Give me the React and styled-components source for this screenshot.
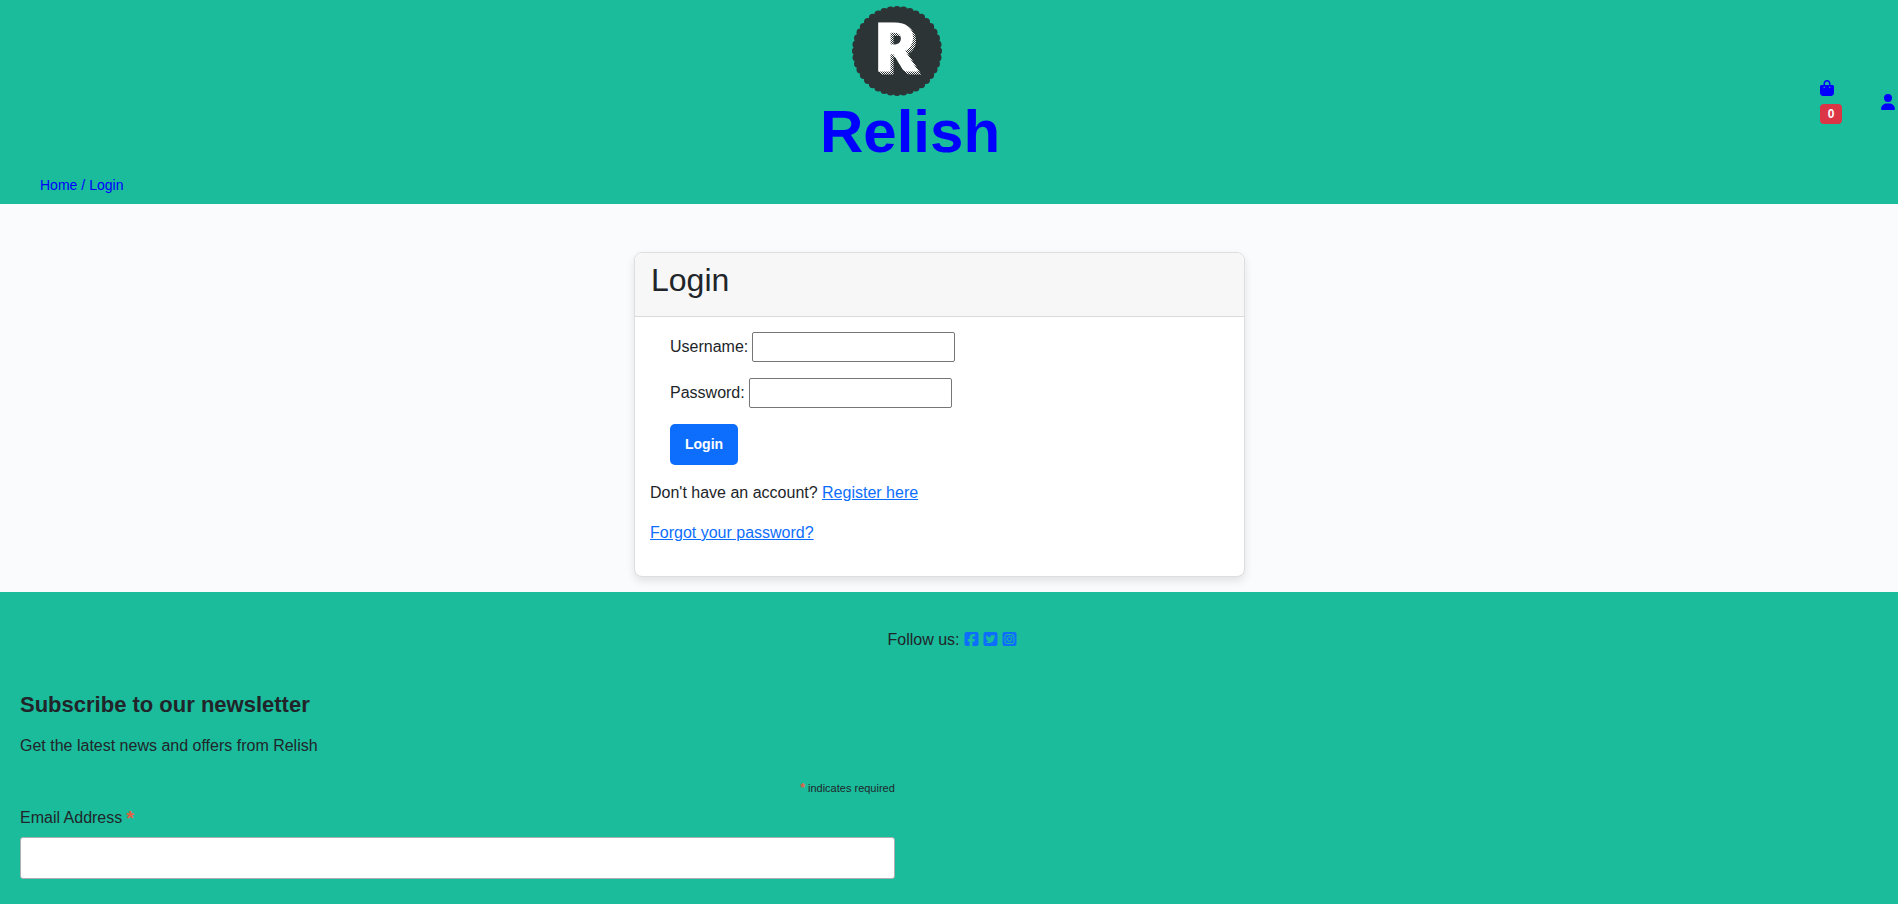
import React from 'react';
import styled, { createGlobalStyle } from 'styled-components';
import {
  FaBagShopping,
  FaUser,
  FaSquareFacebook,
  FaSquareTwitter,
  FaSquareInstagram,
} from 'react-icons/fa6';

const teal = '#1abc9c';
const ink = '#212529';

const GlobalStyle = createGlobalStyle`
  *, *::before, *::after { box-sizing: border-box; }
  body {
    margin: 0;
    background: #fafbfd;
    color: ${ink};
    font-family: "Liberation Sans", Arial, sans-serif;
    font-size: 16px;
    line-height: 24px;
  }
  h1, h2, p { margin: 0; }
`;

const Page = styled.div`
  display: flex;
  flex-direction: column;
  min-height: 100vh;
`;

const Header = styled.header`
  display: flex;
  align-items: center;
  background: ${teal};
`;

const HeaderMain = styled.div`
  flex: 1;
  padding: 6px 0 8px;
`;

const Brand = styled.a`
  display: flex;
  flex-direction: column;
  align-items: center;
  color: #0000ff;
  text-decoration: none;
`;

const Logo = styled.svg`
  width: 90px;
  height: 90px;
  margin-right: 26px;
`;

const BrandName = styled.h1`
  font-size: 60px;
  line-height: 72px;
`;

const Breadcrumb = styled.nav`
  display: flex;
  gap: 4px;
  padding: 6px 40px 0;
  color: #0000ff;
  font-size: 14px;
  line-height: 22px;
`;

const Crumb = styled.a`
  color: inherit;
  text-decoration: none;
`;

const Actions = styled.nav`
  display: flex;
  align-items: center;
  justify-content: space-between;
  width: 78px;
  padding-right: 3px;
`;

const Action = styled.a`
  display: flex;
  flex-direction: column;
  gap: 8px;
  color: #0000ff;
  text-decoration: none;

  svg {
    display: block;
    width: 14px;
    height: 16px;
  }
`;

const Badge = styled.span`
  min-width: 22px;
  padding: 0 4px;
  border-radius: 4px;
  background: #dc3545;
  color: #fff;
  font-size: 12px;
  font-weight: 700;
  line-height: 20px;
  text-align: center;
`;

const Main = styled.main`
  display: flex;
  justify-content: center;
  padding: 48px 19px 15px 0;
`;

const Card = styled.section`
  width: 100%;
  max-width: 611px;
  border: 1px solid #dcdedf;
  border-radius: 8px;
  background: #fff;
  box-shadow: 0 4px 8px rgba(0, 0, 0, 0.1);
`;

const CardHeader = styled.div`
  padding: 8px 16px 16px;
  border-bottom: 1px solid #d8dadb;
  border-radius: 7px 7px 0 0;
  background: #f7f7f7;
`;

const CardTitle = styled.h2`
  font-size: 32px;
  font-weight: 400;
  line-height: 39px;
`;

const CardBody = styled.div`
  display: flex;
  flex-direction: column;
  gap: 16px;
  padding: 15px 15px 31px;
`;

const LoginForm = styled.form`
  display: flex;
  flex-direction: column;
  align-items: flex-start;
  gap: 16px;
  padding-left: 20px;
`;

const Field = styled.div`
  display: flex;
  align-items: center;
  gap: 4px;
`;

const FieldInput = styled.input`
  width: 203px;
  height: 30px;
  padding: 0 4px;
  border: 1px solid #767676;
  border-radius: 2px;
  background: #fff;
  font: inherit;
`;

const LoginButton = styled.button`
  padding: 10px 15px;
  border: 0;
  border-radius: 5px;
  background: #0d6efd;
  color: #fff;
  font-family: inherit;
  font-size: 14px;
  font-weight: 700;
  line-height: 21px;
`;

const TextLink = styled.a`
  color: #0d6efd;
  text-decoration: underline;
`;

const Footer = styled.footer`
  flex: 1;
  padding: 36px 20px 24px;
  background: ${teal};
`;

const Social = styled.div`
  display: flex;
  align-items: center;
  justify-content: center;
  gap: 4px;
  padding-left: 6px;
`;

const SocialLink = styled.a`
  padding-bottom: 2px;
  color: #0d6efd;

  svg {
    display: block;
    width: 15px;
    height: 16px;
  }
`;

const Newsletter = styled.section`
  padding-top: 40px;
`;

const NewsletterTitle = styled.h2`
  margin-bottom: 16px;
  font-size: 22px;
  line-height: 26px;
`;

const NewsletterForm = styled.form`
  display: flex;
  flex-direction: column;
  width: 48%;
  padding: 22px 17px 0 0;
`;

const RequiredNote = styled.p`
  align-self: flex-end;
  margin-bottom: 10px;
  font-size: 11px;
  line-height: 16px;
`;

const EmailLabel = styled.label`
  display: flex;
  gap: 4px;
`;

const Asterisk = styled.span`
  color: #e85c41;
  font-size: ${(p) => p.$size || 12}px;
  font-weight: 700;
`;

const EmailInput = styled.input`
  width: 100%;
  height: 42px;
  margin-top: 7px;
  padding: 8px;
  border: 1px solid #abb0b2;
  border-radius: 3px;
  background: #fff;
  font: inherit;
`;

const scallops = Array.from({ length: 40 }, (_, i) => {
  const angle = (i / 40) * Math.PI * 2;
  return { x: 45 + Math.cos(angle) * 41, y: 45 + Math.sin(angle) * 41 };
});

function RelishLogo() {
  return (
    <Logo viewBox="0 0 90 90" aria-hidden="true">
      <defs>
        {/* Checkered copy of the letter, set down and to the right of it */}
        <filter
          id="halftone-shadow"
          filterUnits="userSpaceOnUse"
          x="0"
          y="0"
          width="90"
          height="90"
          colorInterpolationFilters="sRGB"
        >
          <feFlood x="0" y="0" width="1" height="1" floodColor="#fff" result="dotA" />
          <feFlood x="1" y="1" width="1" height="1" floodColor="#fff" result="dotB" />
          <feMerge x="0" y="0" width="2" height="2" result="cell">
            <feMergeNode in="dotA" />
            <feMergeNode in="dotB" />
          </feMerge>
          <feTile in="cell" result="checks" />
          <feOffset in="SourceAlpha" dx="1" dy="1" result="near" />
          <feOffset in="SourceAlpha" dx="2" dy="2" result="middle" />
          <feOffset in="SourceAlpha" dx="3" dy="3" result="far" />
          <feMerge result="extrusion">
            <feMergeNode in="near" />
            <feMergeNode in="middle" />
            <feMergeNode in="far" />
          </feMerge>
          <feComposite in="checks" in2="extrusion" operator="in" result="shadow" />
          <feMerge>
            <feMergeNode in="shadow" />
            <feMergeNode in="SourceGraphic" />
          </feMerge>
        </filter>
      </defs>
      <g fill="#2d3436">
        <circle cx="45" cy="45" r="42" />
        {scallops.map((s, i) => (
          <circle key={i} cx={s.x} cy={s.y} r="4" />
        ))}
      </g>
      <text
        x="23"
        y="64"
        fill="#fff"
        stroke="#fff"
        strokeWidth="3"
        fontFamily="Lato, sans-serif"
        fontWeight="900"
        fontSize="62"
        filter="url(#halftone-shadow)"
      >
        R
      </text>
    </Logo>
  );
}

export default function App() {
  return (
    <>
      <GlobalStyle />
      <Page>
        <Header>
          <HeaderMain>
            <Brand href="#">
              <RelishLogo />
              <BrandName>Relish</BrandName>
            </Brand>
            <Breadcrumb aria-label="Breadcrumb">
              <Crumb href="#">Home</Crumb>
              <span>/</span>
              <Crumb href="#">Login</Crumb>
            </Breadcrumb>
          </HeaderMain>
          <Actions>
            <Action href="#" aria-label="Shopping bag">
              <FaBagShopping />
              <Badge>0</Badge>
            </Action>
            <Action href="#" aria-label="Account">
              <FaUser />
            </Action>
          </Actions>
        </Header>

        <Main>
          <Card>
            <CardHeader>
              <CardTitle>Login</CardTitle>
            </CardHeader>
            <CardBody>
              <LoginForm onSubmit={(e) => e.preventDefault()}>
                <Field>
                  <label htmlFor="username">Username:</label>
                  <FieldInput id="username" type="text" />
                </Field>
                <Field>
                  <label htmlFor="password">Password:</label>
                  <FieldInput id="password" type="password" />
                </Field>
                <LoginButton type="submit">Login</LoginButton>
              </LoginForm>
              <p>
                Don't have an account? <TextLink href="#">Register here</TextLink>
              </p>
              <p>
                <TextLink href="#">Forgot your password?</TextLink>
              </p>
            </CardBody>
          </Card>
        </Main>

        <Footer>
          <Social>
            <span>Follow us:</span>
            <SocialLink href="#" aria-label="Facebook"><FaSquareFacebook /></SocialLink>
            <SocialLink href="#" aria-label="Twitter"><FaSquareTwitter /></SocialLink>
            <SocialLink href="#" aria-label="Instagram"><FaSquareInstagram /></SocialLink>
          </Social>
          <Newsletter>
            <NewsletterTitle>Subscribe to our newsletter</NewsletterTitle>
            <p>Get the latest news and offers from Relish</p>
            <NewsletterForm onSubmit={(e) => e.preventDefault()}>
              <RequiredNote>
                <Asterisk>*</Asterisk> indicates required
              </RequiredNote>
              <EmailLabel htmlFor="email">
                Email Address <Asterisk $size={20}>*</Asterisk>
              </EmailLabel>
              <EmailInput id="email" type="email" />
            </NewsletterForm>
          </Newsletter>
        </Footer>
      </Page>
    </>
  );
}
